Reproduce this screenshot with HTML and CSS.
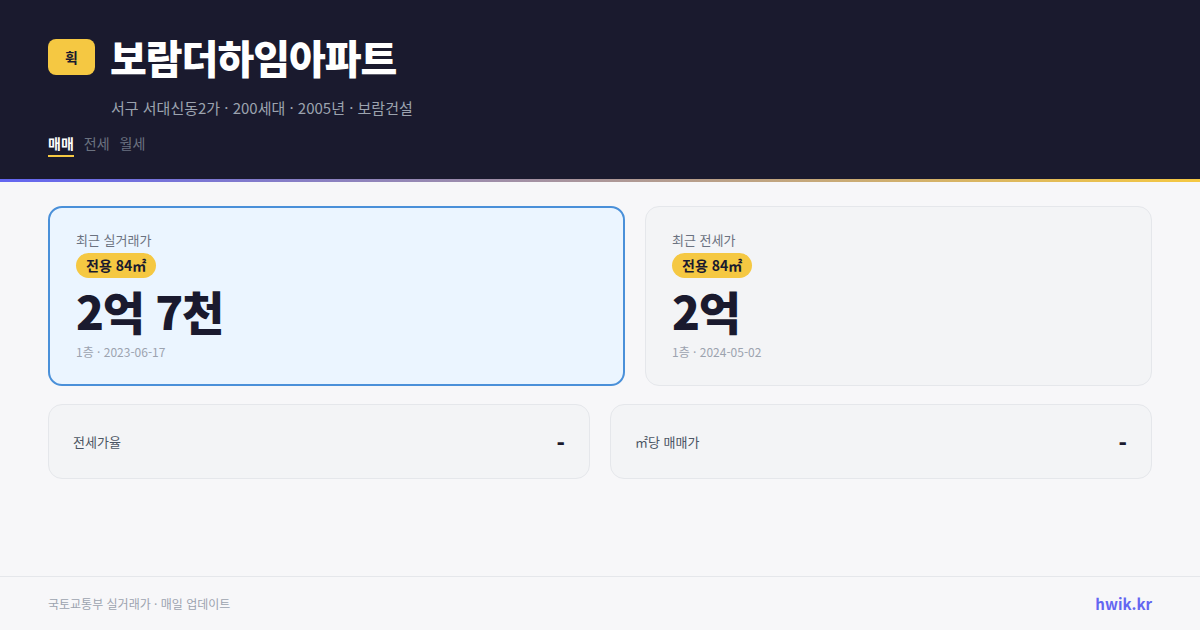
FILE: index.html
```html
<!DOCTYPE html>
<html lang="ko">
<head>
<meta charset="utf-8">
<link rel="stylesheet" href="styles.css">
</head>
<body>
<div class="page">
  <header class="hero">
    <div class="title-row">
      <span class="logo">휙</span>
      <h1 class="title">보람더하임아파트</h1>
    </div>
    <div class="sub">서구 서대신동2가 · 200세대 · 2005년 · 보람건설</div>
    <nav class="tabs">
      <span class="tab active">매매</span>
      <span class="tab">전세</span>
      <span class="tab">월세</span>
    </nav>
  </header>
  <div class="accent"></div>
  <main class="main">
    <div class="top-grid">
      <section class="card card-primary">
        <div class="card-label">최근 실거래가</div>
        <span class="pill">전용 84㎡</span>
        <div class="price">2억 7천</div>
        <div class="meta">1층 · 2023-06-17</div>
      </section>
      <section class="card">
        <div class="card-label">최근 전세가</div>
        <span class="pill">전용 84㎡</span>
        <div class="price">2억</div>
        <div class="meta">1층 · 2024-05-02</div>
      </section>
    </div>
    <div class="bottom-grid">
      <div class="stat">
        <span class="stat-label">전세가율</span>
        <span class="stat-value">-</span>
      </div>
      <div class="stat">
        <span class="stat-label">㎡당 매매가</span>
        <span class="stat-value">-</span>
      </div>
    </div>
  </main>
  <footer class="footer">
    <span class="foot-text">국토교통부 실거래가 · 매일 업데이트</span>
    <span class="brand">hwik.kr</span>
  </footer>
</div>
</body>
</html>
```
FILE: styles.css
```css
* { box-sizing: border-box; margin: 0; padding: 0; }
html, body { width: 1200px; height: 630px; overflow: hidden; }
body {
  background: #f7f7f9;
  font-family: "Noto Sans CJK KR", "Noto Sans", sans-serif;
  color: #1a1a2e;
}
.page { display: flex; flex-direction: column; height: 630px; }
.hero {
  background: #1a1a2e;
  height: 179px;
  padding: 29px 48px 0;
  display: flex;
  flex-direction: column;
}
.title-row { display: flex; align-items: center; gap: 15px; }
.logo {
  width: 47px; height: 36px;
  background: #f5c842;
  border-radius: 8px;
  display: flex; align-items: center; justify-content: center;
  font-size: 14px; font-weight: 700; color: #1a1a2e;
}
.title {
  font-size: 40px; font-weight: 900; color: #fff;
  line-height: 56px; letter-spacing: -1px;
}
.sub {
  margin-top: 12px;
  padding-left: 63px;
  font-size: 15px; line-height: 22px;
  color: #9ca3af;
}
.tabs { display: flex; gap: 10px; margin-top: 14px; }
.tab {
  font-size: 14px; line-height: 20px; color: #6b7280;
  padding-bottom: 2px;
  border-bottom: 2px solid transparent;
}
.tab.active { color: #fff; font-weight: 700; border-bottom-color: #f5c842; }
.accent { height: 3px; background: linear-gradient(90deg, #6366f1, #f5c842); }
.main { flex: 1; padding: 24px 48px 0; display: flex; flex-direction: column; gap: 18px; }
.top-grid { display: grid; grid-template-columns: 577px 1fr; gap: 20px; }
.card {
  height: 180px;
  background: #f3f4f6;
  border: 1px solid #e5e7eb;
  border-radius: 14px;
  padding: 24px 26px;
  display: flex; flex-direction: column; align-items: flex-start;
}
.card-primary {
  background: #ebf5ff;
  border: 2px solid #4a90d9;
  padding: 23px 26px;
}
.card-label { font-size: 13px; line-height: 18px; color: #6b7280; }
.pill {
  margin-top: 4px;
  background: #f5c842;
  border-radius: 13px;
  padding: 0 10px;
  height: 25px; line-height: 25px;
  font-size: 14px; font-weight: 700; color: #1a1a2e;
}
.price {
  margin-top: 1px;
  font-size: 46px; font-weight: 900; line-height: 62px;
  letter-spacing: -1.3px; color: #1a1a2e;
}
.meta { margin-top: 3px; font-size: 12px; line-height: 16px; color: #9ca3af; }
.bottom-grid { display: grid; grid-template-columns: 1fr 1fr; gap: 20px; }
.stat {
  height: 75px;
  background: #f3f4f6;
  border: 1px solid #e5e7eb;
  border-radius: 14px;
  padding: 0 24px;
  display: flex; align-items: center; justify-content: space-between;
}
.stat-label { font-size: 13px; color: #4b5563; }
.stat-value { font-size: 22px; font-weight: 900; color: #1a1a2e; }
.footer {
  height: 54px;
  border-top: 1px solid #e5e7eb;
  padding: 0 48px;
  display: flex; align-items: center; justify-content: space-between;
}
.foot-text { font-size: 12px; color: #9ca3af; }
.brand { font-size: 15px; font-weight: 700; color: #6366f1; }
```
